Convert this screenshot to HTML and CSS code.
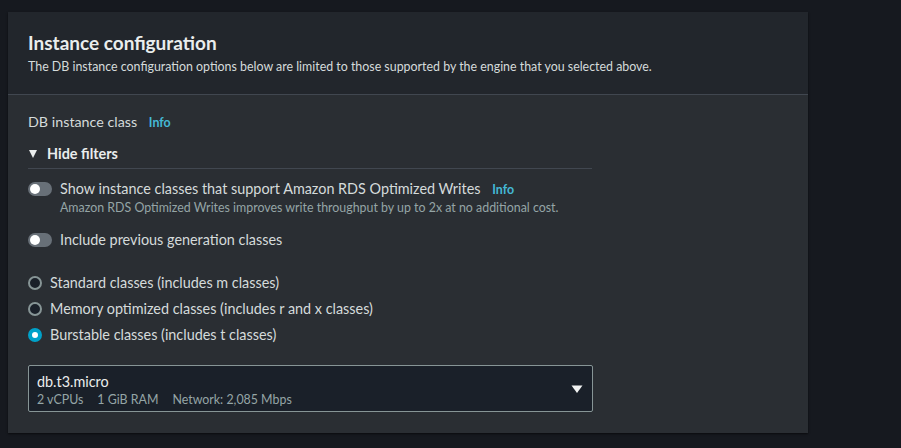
FILE: index.html
```html
<!DOCTYPE html>
<html lang="en">
<head>
<meta charset="utf-8">
<title>Instance configuration</title>
<link rel="stylesheet" href="styles.css">
</head>
<body>
<section class="card">
  <header class="card-header">
    <h2 class="title">Instance configuration</h2>
    <p class="subtitle">The DB instance configuration options below are limited to those supported by the engine that you selected above.</p>
  </header>
  <div class="card-body">
    <div class="field-label">DB instance class <span class="info">Info</span></div>
    <div class="filters">
      <div class="filters-head"><span class="caret"></span>Hide filters</div>
      <div class="toggle-row">
        <span class="toggle"><span class="knob"></span></span>
        <div class="toggle-text">
          <div class="toggle-label">Show instance classes that support Amazon RDS Optimized Writes <span class="info">Info</span></div>
          <div class="toggle-desc">Amazon RDS Optimized Writes improves write throughput by up to 2x at no additional cost.</div>
        </div>
      </div>
      <div class="toggle-row second">
        <span class="toggle"><span class="knob"></span></span>
        <div class="toggle-text">
          <div class="toggle-label">Include previous generation classes</div>
        </div>
      </div>
      <div class="radios">
        <label class="radio"><span class="dot"></span>Standard classes (includes m classes)</label>
        <label class="radio"><span class="dot"></span>Memory optimized classes (includes r and x classes)</label>
        <label class="radio"><span class="dot checked"></span>Burstable classes (includes t classes)</label>
      </div>
    </div>
    <div class="select">
      <div class="select-text">
        <div class="select-value">db.t3.micro</div>
        <div class="select-meta"><span>2 vCPUs</span><span>1 GiB RAM</span><span>Network: 2,085 Mbps</span></div>
      </div>
      <svg class="select-caret" width="12" height="10" viewBox="0 0 12 10"><path d="M0.5 1.5 H11.5 L6 9 Z" fill="#f2f3f3"/></svg>
    </div>
  </div>
</section>
</body>
</html>
```
FILE: styles.css
```css
* { box-sizing: border-box; }
html, body { margin: 0; }
body {
  background: #16191f;
  padding: 12px 93px 15px 8px;
  font-family: "Lato", "Liberation Sans", sans-serif;
  color: #d5dbdb;
}
.card {
  width: 800px;
  background: #2a2e33;
  box-shadow: 0 1px 2px rgba(0,0,0,0.6);
}
.card-header {
  background: #22262c;
  padding: 20px 20px 19px 20px;
  border-bottom: 1px solid #414750;
}
.title {
  margin: 0;
  font-size: 19px;
  line-height: 22px;
  font-weight: 700;
  color: #eaeded;
}
.subtitle {
  margin: 5px 0 0;
  font-size: 12.4px;
  line-height: 16px;
  color: #d5dbdb;
}
.card-body {
  padding: 17px 20px 21px 20px;
}
.field-label {
  font-size: 14.3px;
  line-height: 20px;
  color: #d5dbdb;
}
.info {
  font-size: 12.4px;
  font-weight: 700;
  color: #44b9d6;
  margin-left: 8px;
}
.filters { width: 564px; margin-top: 11px; }
.filters-head {
  display: flex;
  align-items: center;
  height: 20px;
  font-size: 14.4px;
  line-height: 20px;
  font-weight: 700;
  color: #eaeded;
  box-sizing: content-box;
  padding-bottom: 4px;
  border-bottom: 1px solid #414750;
}
.caret {
  width: 0; height: 0;
  border-left: 4.5px solid transparent;
  border-right: 4.5px solid transparent;
  border-top: 8px solid #eaeded;
  margin: 0 10px 0 1px;
}
.toggle-row {
  display: flex;
  align-items: flex-start;
  margin-top: 10px;
}
.toggle-row.second { margin-top: 14px; }
.toggle {
  flex: none;
  width: 24px;
  height: 14px;
  border-radius: 7px;
  background: #687078;
  margin: 3px 8px 0 0;
  position: relative;
}
.knob {
  position: absolute;
  left: 2px; top: 2px;
  width: 10px; height: 10px;
  border-radius: 50%;
  background: #ffffff;
}
.toggle-label {
  font-size: 14.4px;
  line-height: 20px;
  color: #d5dbdb;
}
.toggle-desc {
  font-size: 12.4px;
  line-height: 16px;
  color: #95a5a6;
  margin-top: 0;
}
.radios {
  display: flex;
  flex-direction: column;
  gap: 6px;
  margin-top: 23px;
}
.radio {
  display: flex;
  align-items: center;
  height: 20px;
  font-size: 14.4px;
  line-height: 20px;
  color: #d5dbdb;
}
.dot {
  flex: none;
  width: 14px; height: 14px;
  border-radius: 50%;
  border: 2px solid #879596;
  background: #1a2029;
  margin-right: 8px;
}
.dot.checked {
  border: 4px solid #00a1c9;
  background: #ffffff;
}
.select {
  width: 565px;
  margin-top: 20px;
  height: 47px;
  border: 1px solid #879596;
  border-radius: 2px;
  background: #1a2029;
  display: flex;
  align-items: flex-start;
  padding: 7px 9px 0 8px;
}
.select-text { flex: 1; }
.select-value {
  font-size: 14.4px;
  line-height: 18px;
  color: #eaeded;
}
.select-meta {
  display: flex;
  gap: 14px;
  font-size: 12.4px;
  line-height: 16px;
  color: #95a5a6;
  margin-top: 1px;
}
.select-caret { margin-top: 11px; }
```
